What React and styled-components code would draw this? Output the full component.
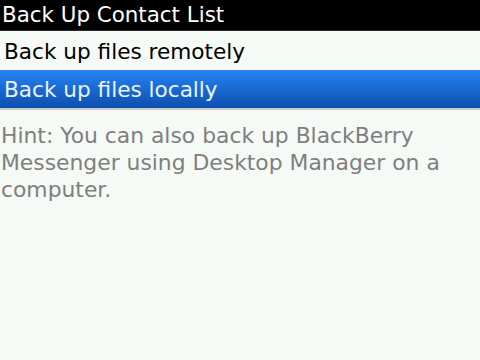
import React from 'react';
import styled, { createGlobalStyle } from 'styled-components';

const Global = createGlobalStyle`
  html, body {
    margin: 0;
    padding: 0;
    background: #f6faf6;
  }
  body {
    font-family: "DejaVu Sans", sans-serif;
  }
`;

const Screen = styled.div`
  width: 480px;
  height: 360px;
  background: #f6faf6;
  display: flex;
  flex-direction: column;
  overflow: hidden;
`;

const TitleBar = styled.div`
  height: 31px;
  background: #000;
  color: #fff;
  font-size: 21.4px;
  line-height: 29px;
  padding-left: 2px;
  border-bottom: 1px solid #2a2a2a;
  box-sizing: border-box;
`;

const List = styled.div`
  display: flex;
  flex-direction: column;
  border-bottom: 2px solid #c9cdc9;
`;

const Row = styled.div`
  height: 38px;
  box-sizing: border-box;
  padding: 2px 0 0 4px;
  line-height: 36px;
  font-size: 21.6px;
  margin-top: ${p => (p.$first ? '1px' : '0')};
  color: ${p => (p.$selected ? '#eaf2ff' : '#000')};
  background: ${p =>
    p.$selected ? 'linear-gradient(#2684f4, #0c4fae)' : 'transparent'};
`;

const Hint = styled.p`
  margin: 12px 0 0;
  padding: 0 1px;
  font-size: 21.85px;
  line-height: 27px;
  color: #7f7f7f;
`;

const App = () => {
  return (
    <Screen>
      <Global />
      <TitleBar>Back Up Contact List</TitleBar>
      <List>
        <Row $first>Back up files remotely</Row>
        <Row $selected>Back up files locally</Row>
      </List>
      <Hint>
        Hint: You can also back up BlackBerry Messenger using Desktop Manager on a computer.
      </Hint>
    </Screen>
  );
};

export default App;
